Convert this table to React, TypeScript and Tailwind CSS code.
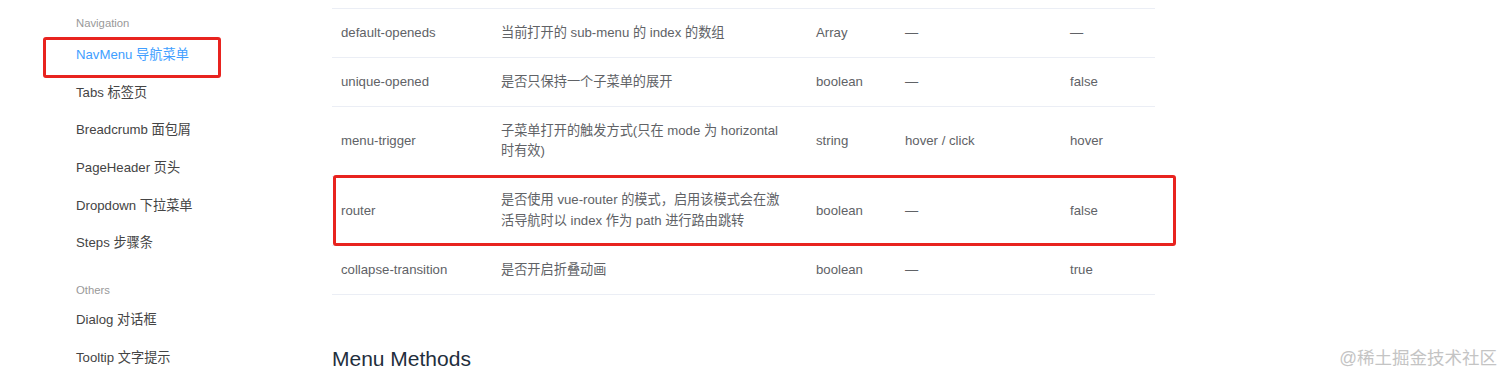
import React from "react";

const navItems = [
  "NavMenu 导航菜单",
  "Tabs 标签页",
  "Breadcrumb 面包屑",
  "PageHeader 页头",
  "Dropdown 下拉菜单",
  "Steps 步骤条",
];

const otherItems = ["Dialog 对话框", "Tooltip 文字提示"];

type Row = {
  name: string;
  desc: string[];
  type: string;
  options: string;
  def: string;
  marked?: boolean;
};

const rows: Row[] = [
  {
    name: "default-openeds",
    desc: ["当前打开的 sub-menu 的 index 的数组"],
    type: "Array",
    options: "—",
    def: "—",
  },
  {
    name: "unique-opened",
    desc: ["是否只保持一个子菜单的展开"],
    type: "boolean",
    options: "—",
    def: "false",
  },
  {
    name: "menu-trigger",
    desc: ["子菜单打开的触发方式(只在 mode 为 horizontal", "时有效)"],
    type: "string",
    options: "hover / click",
    def: "hover",
  },
  {
    name: "router",
    desc: [
      "是否使用 vue-router 的模式，启用该模式会在激",
      "活导航时以 index 作为 path 进行路由跳转",
    ],
    type: "boolean",
    options: "—",
    def: "false",
    marked: true,
  },
  {
    name: "collapse-transition",
    desc: ["是否开启折叠动画"],
    type: "boolean",
    options: "—",
    def: "true",
  },
];

const font = {
  fontFamily: '"Liberation Sans", "Noto Sans CJK SC", sans-serif',
};

function Sidebar() {
  return (
    <aside className="w-[332px] shrink-0 pl-[76px] pt-[16px]">
      <div className="text-[11.3px] leading-[14px] text-[#999]">Navigation</div>
      <ul className="mt-[7px]">
        {navItems.map((item, i) => (
          <li
            key={item}
            className={
              "relative h-[37.7px] text-[13.2px] leading-[36px] " +
              (i === 0 ? "text-[#409eff]" : "text-[#444]")
            }
          >
            {item}
            {i === 0 && (
              <span className="pointer-events-none absolute left-[-33px] top-0 h-[41px] w-[178px] rounded-[3px] border-[3px] border-[#e8231f]" />
            )}
          </li>
        ))}
      </ul>
      <div className="mt-[20px] text-[11.3px] leading-[14px] text-[#999]">Others</div>
      <ul className="mt-[4px]">
        {otherItems.map((item) => (
          <li key={item} className="h-[38px] text-[13.2px] leading-[38px] text-[#444]">
            {item}
          </li>
        ))}
      </ul>
    </aside>
  );
}

function AttrTable() {
  return (
    <div className="w-[823px] border-t border-[#ebeef5] text-[13.2px] leading-[20.5px] text-[#606266]">
      {rows.map((r) => (
        <div
          key={r.name}
          className="relative grid grid-cols-[159px_315px_89px_165px_95px] items-center border-b border-[#ebeef5] py-[13.75px]"
        >
          <div className="px-[9px]">{r.name}</div>
          <div className="px-[10px]">
            {r.desc.map((line) => (
              <div key={line} className="whitespace-nowrap">
                {line}
              </div>
            ))}
          </div>
          <div className="px-[10px]">{r.type}</div>
          <div className="px-[10px]">{r.options}</div>
          <div className="px-[10px]">{r.def}</div>
          {r.marked && (
            <span className="pointer-events-none absolute left-[1px] right-[-21px] top-[-2px] bottom-[-1px] rounded-[3px] border-[3px] border-[#e8231f]" />
          )}
        </div>
      ))}
    </div>
  );
}

export default function App() {
  return (
    <div className="relative h-[385px] w-[1512px] overflow-hidden bg-white" style={font}>
      <div className="flex">
        <Sidebar />
        <main className="pt-[8px]">
          <AttrTable />
          <h3 className="mt-[50px] text-[21px] leading-[28px] text-[#1f2f3d]">Menu Methods</h3>
        </main>
      </div>
      <div className="absolute bottom-[16px] right-[15px] text-[17.5px] leading-[22px] text-[#c4c4c4]">
        @稀土掘金技术社区
      </div>
    </div>
  );
}
